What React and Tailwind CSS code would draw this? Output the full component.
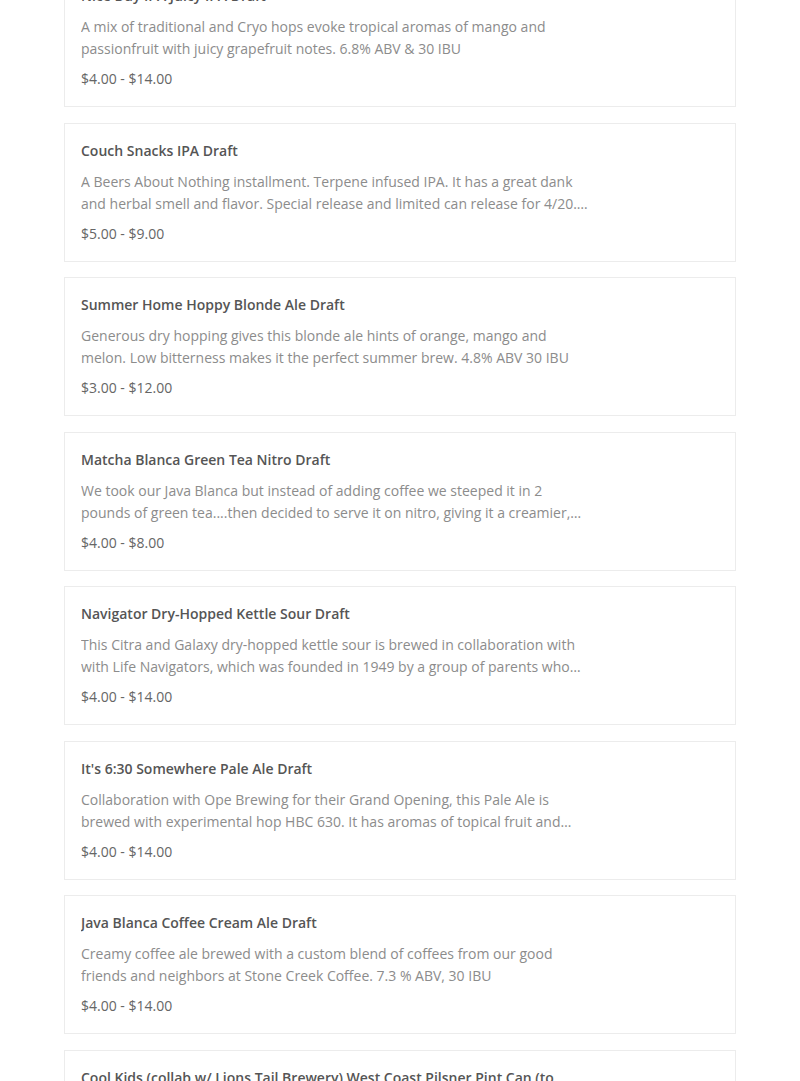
const items = [
  {
    name: 'Nice Day IPA Juicy IPA Draft',
    desc: 'A mix of traditional and Cryo hops evoke tropical aromas of mango and passionfruit with juicy grapefruit notes. 6.8% ABV & 30 IBU',
    price: '$4.00 - $14.00',
  },
  {
    name: 'Couch Snacks IPA Draft',
    desc: 'A Beers About Nothing installment. Terpene infused IPA. It has a great dank and herbal smell and flavor. Special release and limited can release for 4/20. Get it while it lasts.',
    price: '$5.00 - $9.00',
  },
  {
    name: 'Summer Home Hoppy Blonde Ale Draft',
    desc: 'Generous dry hopping gives this blonde ale hints of orange, mango and melon. Low bitterness makes it the perfect summer brew. 4.8% ABV 30 IBU',
    price: '$3.00 - $12.00',
  },
  {
    name: 'Matcha Blanca Green Tea Nitro Draft',
    desc: 'We took our Java Blanca but instead of adding coffee we steeped it in 2 pounds of green tea....then decided to serve it on nitro, giving it a creamier, smoother mouthfeel.',
    price: '$4.00 - $8.00',
  },
  {
    name: 'Navigator Dry-Hopped Kettle Sour Draft',
    desc: 'This Citra and Galaxy dry-hopped kettle sour is brewed in collaboration with with Life Navigators, which was founded in 1949 by a group of parents who wanted more for their children.',
    price: '$4.00 - $14.00',
  },
  {
    name: "It's 6:30 Somewhere Pale Ale Draft",
    desc: 'Collaboration with Ope Brewing for their Grand Opening, this Pale Ale is brewed with experimental hop HBC 630. It has aromas of topical fruit and citrus.',
    price: '$4.00 - $14.00',
  },
  {
    name: 'Java Blanca Coffee Cream Ale Draft',
    desc: 'Creamy coffee ale brewed with a custom blend of coffees from our good friends and neighbors at Stone Creek Coffee. 7.3 % ABV, 30 IBU',
    price: '$4.00 - $14.00',
  },
  {
    name: 'Cool Kids (collab w/ Lions Tail Brewery) West Coast Pilsner Pint Can (to go)',
    desc: 'A crisp, hoppy West Coast pilsner brewed with our friends at Lions Tail Brewery.',
    price: '$4.00 - $14.00',
  },
];

const MenuItem = ({ item }) => (
  <div className="border border-[#ececec] bg-white px-4 pt-[17px] pb-[17px] flex">
    <div className="w-[508px] min-w-0">
      <h3 className="max-w-[490px] text-[14px] leading-5 font-semibold text-[#555555] truncate">{item.name}</h3>
      <p className="mt-[10px] text-[14px] leading-[22px] text-[#8c8c8c] line-clamp-2">{item.desc}</p>
      <div className="mt-[9px] text-[14px] leading-5 text-[#666666]">{item.price}</div>
    </div>
  </div>
);

export default function App() {
  return (
    <div
      className="bg-white overflow-hidden h-[1081px]"
      style={{ fontFamily: '"Open Sans", Lato, sans-serif' }}
    >
      <div className="mx-16 -mt-[32px] flex flex-col gap-[15.5px]">
        {items.map((item) => (
          <MenuItem key={item.name} item={item} />
        ))}
      </div>
    </div>
  );
}
